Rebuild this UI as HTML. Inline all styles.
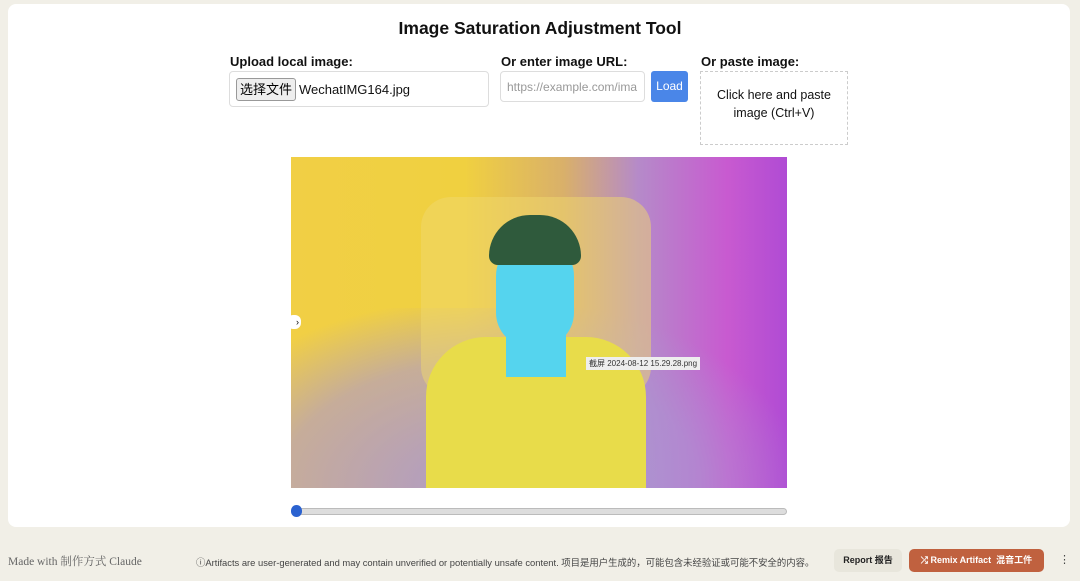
<!DOCTYPE html>
<html><head><meta charset="utf-8"><style>
body{margin:0;width:1080px;height:581px;background:#f1efe7;font-family:"Liberation Sans","Noto Sans CJK SC",sans-serif;position:relative;overflow:hidden}
.card{position:absolute;left:8px;top:4px;width:1062px;height:523px;background:#fff;border-radius:8px}
h1{position:absolute;top:18px;left:0;width:1080px;text-align:center;margin:0;font-size:17.5px;font-weight:bold;color:#111}
.lbl{position:absolute;font-size:13px;font-weight:bold;color:#111}
.box{position:absolute;border:1px solid #ddd;border-radius:4px;background:#fff}
.img{position:absolute;left:291px;top:157px;width:496px;height:331px;overflow:hidden;
background:linear-gradient(90deg,#f1cf45 0%,#f0d040 35%,#d9b06a 55%,#b58ac9 70%,#c85ad0 88%,#b04bd4 100%)}
</style></head><body>
<div class="card"></div>
<h1>Image Saturation Adjustment Tool</h1>
<div class="lbl" style="left:230px;top:54px">Upload local image:</div>
<div class="box" style="left:229px;top:71px;width:258px;height:34px"></div>
<div style="position:absolute;left:236px;top:78px;width:58px;height:21px;border:1px solid #999;border-radius:3px;background:#eee;font-size:13px;text-align:center;line-height:21px">选择文件</div>
<div style="position:absolute;left:299px;top:82px;font-size:13px;color:#111">WechatIMG164.jpg</div>
<div class="lbl" style="left:501px;top:54px">Or enter image URL:</div>
<div class="box" style="left:500px;top:71px;overflow:hidden;font-size:12px;color:#999;line-height:30px;padding-left:6px;box-sizing:border-box;width:145px;height:31px;white-space:nowrap">https://example.com/ima</div>
<div style="position:absolute;left:651px;top:71px;width:37px;height:31px;background:#4a86e8;border-radius:3px;color:#fff;font-size:12px;text-align:center;line-height:31px">Load</div>
<div class="lbl" style="left:701px;top:54px">Or paste image:</div>
<div style="position:absolute;left:700px;top:71px;border:1px dashed #ccc;font-size:12.5px;text-align:center;color:#111;line-height:18px;padding-top:14px;box-sizing:border-box;width:148px;height:74px">Click here and paste<br>image (Ctrl+V)</div>
<div class="img">
<div style="position:absolute;left:0;bottom:0;width:496px;height:180px;background:radial-gradient(ellipse at 40% 100%,rgba(170,150,210,.95),rgba(170,150,210,.6) 50%,rgba(170,150,210,0) 75%)"></div>
<div style="position:absolute;left:130px;top:40px;width:230px;height:200px;border-radius:30px;background:rgba(240,215,110,.5)"></div>
<div style="position:absolute;left:135px;top:180px;width:220px;height:151px;background:#e8dc4a;border-radius:60px 60px 0 0"></div>
<div style="position:absolute;left:205px;top:80px;width:78px;height:110px;background:#55d4ee;border-radius:40px 40px 35px 35px"></div>
<div style="position:absolute;left:198px;top:58px;width:92px;height:50px;background:#2f5a3c;border-radius:46px 46px 10px 10px"></div>
<div style="position:absolute;left:215px;top:170px;width:60px;height:50px;background:#55d4ee"></div>
<div style="position:absolute;left:-4px;top:158px;width:12px;height:14px;background:#fff;border-radius:6px;font-size:9px;line-height:14px;text-align:right;padding-right:2px">›</div>
<div style="position:absolute;left:295px;top:200px;background:#eee;font-size:8px;padding:1px 3px;color:#333">截屏 2024-08-12 15.29.28.png</div>
</div>
<div style="position:absolute;left:292px;top:508px;width:493px;height:5px;background:#ddd;border:1px solid #bbb;border-radius:4px"></div>
<div style="position:absolute;left:291px;top:505px;width:11px;height:12px;background:#2b62d0;border-radius:6px"></div>
<div style="position:absolute;left:8px;top:553px;font-family:'Liberation Serif','Noto Serif CJK SC',serif;font-size:11.5px;color:#666">Made with 制作方式 Claude</div>
<div style="position:absolute;left:196px;top:555px;font-size:9.4px;color:#444;white-space:nowrap">ⓘArtifacts are user-generated and may contain unverified or potentially unsafe content. 项目是用户生成的，可能包含未经验证或可能不安全的内容。</div>
<div style="position:absolute;left:834px;top:549px;width:68px;height:23px;background:#e8e6dc;border-radius:5px;font-size:9px;font-weight:bold;line-height:23px;text-align:center;color:#222">Report 报告</div>
<div style="position:absolute;left:909px;top:549px;width:135px;height:23px;background:#c0613f;border-radius:5px;font-size:9px;font-weight:bold;line-height:23px;text-align:center;color:#fff">⤮ Remix Artifact &nbsp;混音工件</div>
<div style="position:absolute;left:1059px;top:553px;font-size:11px;color:#444">⋮</div>
</body></html>
